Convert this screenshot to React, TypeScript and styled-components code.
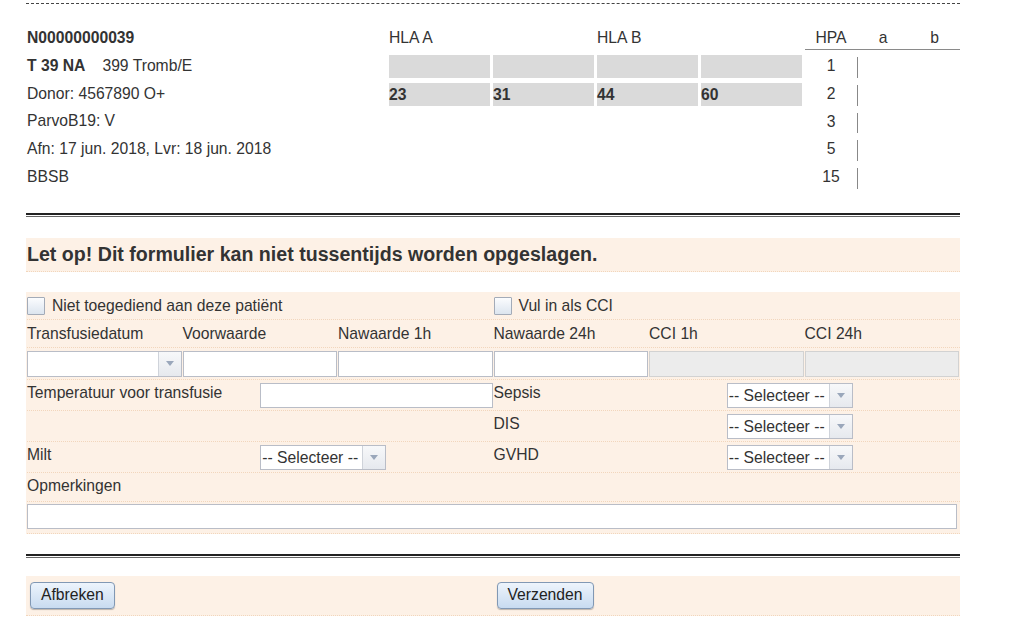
import React from 'react';
import styled, { createGlobalStyle } from 'styled-components';

const PEACH = '#fdf1e6';
const DOTS = '#f2d6bc';

const GlobalStyle = createGlobalStyle`
  html, body {
    margin: 0;
    background: #fff;
  }
  body {
    font-family: "Liberation Sans", Arial, sans-serif;
    font-size: 15.7px;
    color: #333;
  }
  * {
    box-sizing: border-box;
  }
`;

const Page = styled.div`
  width: 934px;
  margin-left: 26px;
  padding-top: 3px;
`;

const DashedRule = styled.div`
  border-top: 1px dashed #444;
`;

const DoubleRule = styled.div<{ $gap: number }>`
  margin-top: ${p => p.$gap}px;
  height: 4px;
  border-top: 2px solid #222;
  border-bottom: 1px solid #666;
`;

/* summary block */

const Summary = styled.div`
  display: flex;
  padding-top: 20px;
`;

const InfoColumn = styled.div`
  width: 363px;
  padding-left: 1px;
`;

const InfoLine = styled.div`
  line-height: 27.8px;
  white-space: nowrap;
`;

const Strong = styled.span<{ $gap?: number }>`
  font-weight: bold;
  margin-right: ${p => p.$gap ?? 0}px;
`;

const HlaGrid = styled.div`
  display: grid;
  grid-template-columns: repeat(4, 101px);
  grid-template-rows: 26px 23px 23px;
  column-gap: 3px;
  row-gap: 5px;
  align-self: flex-start;
`;

const HlaHeading = styled.div`
  grid-column: span 2;
  line-height: 28px;
`;

const HlaCell = styled.div`
  background: #dadada;
  font-weight: bold;
  line-height: 23px;
`;

const HpaGrid = styled.div`
  margin-left: auto;
  width: 155px;
  display: grid;
  grid-template-columns: 52px 52px 51px;
  grid-auto-rows: 27.8px;
  grid-template-rows: 28px;
  align-self: flex-start;
`;

const HpaHead = styled.div`
  height: 26px;
  line-height: 28px;
  text-align: center;
  border-bottom: 1px solid #8a8a8a;
`;

const HpaNum = styled.div`
  text-align: center;
  line-height: 27.8px;
`;

const HpaDivider = styled.div`
  margin: 5px 0 2px;
  border-left: 1px solid #888;
`;

/* notice */

const Notice = styled.div`
  margin-top: 21px;
  height: 34px;
  padding-left: 1px;
  line-height: 33px;
  background: ${PEACH};
  border-bottom: 1px dotted ${DOTS};
  font-size: 19.6px;
  font-weight: bold;
  color: #333;
`;

/* form */

const Form = styled.div`
  margin-top: 20px;
  background: ${PEACH};
  padding-left: 1px;
`;

const Row = styled.div<{ $cols: number; $pad: string; $center?: boolean }>`
  display: grid;
  grid-template-columns: repeat(${p => p.$cols}, 1fr);
  align-items: ${p => (p.$center ? 'center' : 'start')};
  padding: ${p => p.$pad};
  border-bottom: 1px dotted ${DOTS};
`;

const FieldLabel = styled.div`
  line-height: 20px;
  white-space: nowrap;
`;

const CheckLabel = styled.label`
  display: flex;
  align-items: center;
  gap: 7px;
  line-height: 18px;
`;

const CheckBox = styled.span`
  width: 18px;
  height: 18px;
  border: 1px solid #a3abb8;
  border-radius: 1px;
  background: linear-gradient(#fbfcfe, #dce5ef);
`;

const TextInput = styled.input<{ $h: number; $off?: boolean; $w?: string }>`
  display: block;
  width: ${p => p.$w ?? 'calc(100% - 1px)'};
  height: ${p => p.$h}px;
  margin: 0;
  padding: 0 2px;
  border: 1px solid ${p => (p.$off ? '#d2d2d2' : '#b9bdc7')};
  background: ${p => (p.$off ? '#ececec' : '#fff')};
  font: inherit;
  color: #333;
  outline: none;
`;

const ComboBox = styled.div<{ $w: string; $h: number }>`
  display: flex;
  width: ${p => p.$w};
  height: ${p => p.$h}px;
  border: 1px solid #b9bdc7;
  background: #fff;
`;

const ComboText = styled.div`
  flex: 1;
  padding-left: 1px;
  line-height: 23px;
  white-space: nowrap;
  overflow: hidden;
`;

const Trigger = styled.div`
  width: 23px;
  display: flex;
  align-items: center;
  justify-content: center;
  border-left: 1px solid #cfd3da;
  background: linear-gradient(#f7f8fa, #e6e9ee);
`;

const ButtonBar = styled.div`
  margin-top: 18px;
  display: grid;
  grid-template-columns: 1fr 1fr;
  padding: 6px 0 6px 1px;
  background: ${PEACH};
  border-bottom: 1px dotted ${DOTS};
`;

const Button = styled.button`
  justify-self: start;
  margin-left: 3px;
  height: 27px;
  padding: 0 10px;
  border: 1px solid #8198b4;
  border-radius: 4px;
  background: linear-gradient(#edf4fc, #c8dbf0);
  box-shadow: 0 1px 1px rgba(0, 0, 0, 0.25);
  font: inherit;
  color: #222;
`;

const Arrow = () => (
  <svg width="8" height="5" viewBox="0 0 8 5">
    <polygon points="0,0 8,0 4,5" fill="#9aa7bb" />
  </svg>
);

const Select = ({ text = '', w, h }: { text?: string; w: string; h: number }) => (
  <ComboBox $w={w} $h={h}>
    <ComboText>{text}</ComboText>
    <Trigger>
      <Arrow />
    </Trigger>
  </ComboBox>
);

const hpaValues = [1, 2, 3, 5, 15];
const hlaValues = ['23', '31', '44', '60'];

export default function App() {
  return (
    <>
      <GlobalStyle />
      <Page>
        <DashedRule />

        <Summary>
          <InfoColumn>
            <InfoLine>
              <Strong>N00000000039</Strong>
            </InfoLine>
            <InfoLine>
              <Strong $gap={17}>T 39 NA</Strong>399 Tromb/E
            </InfoLine>
            <InfoLine>Donor: 4567890 O+</InfoLine>
            <InfoLine>ParvoB19: V</InfoLine>
            <InfoLine>Afn: 17 jun. 2018, Lvr: 18 jun. 2018</InfoLine>
            <InfoLine>BBSB</InfoLine>
          </InfoColumn>

          <HlaGrid>
            <HlaHeading>HLA A</HlaHeading>
            <HlaHeading>HLA B</HlaHeading>
            {hlaValues.map((_, i) => (
              <HlaCell key={`e${i}`} />
            ))}
            {hlaValues.map(v => (
              <HlaCell key={v}>{v}</HlaCell>
            ))}
          </HlaGrid>

          <HpaGrid>
            <HpaHead>HPA</HpaHead>
            <HpaHead>a</HpaHead>
            <HpaHead>b</HpaHead>
            {hpaValues.map(n => (
              <React.Fragment key={n}>
                <HpaNum>{n}</HpaNum>
                <HpaDivider />
                <div />
              </React.Fragment>
            ))}
          </HpaGrid>
        </Summary>

        <DoubleRule $gap={22} />

        <Notice>Let op! Dit formulier kan niet tussentijds worden opgeslagen.</Notice>

        <Form>
          <Row $cols={2} $pad="5px 0 4px" $center>
            <CheckLabel>
              <CheckBox />
              Niet toegediend aan deze patiënt
            </CheckLabel>
            <CheckLabel>
              <CheckBox />
              Vul in als CCI
            </CheckLabel>
          </Row>

          <Row $cols={6} $pad="4px 0 3px">
            <FieldLabel>Transfusiedatum</FieldLabel>
            <FieldLabel>Voorwaarde</FieldLabel>
            <FieldLabel>Nawaarde 1h</FieldLabel>
            <FieldLabel>Nawaarde 24h</FieldLabel>
            <FieldLabel>CCI 1h</FieldLabel>
            <FieldLabel>CCI 24h</FieldLabel>
          </Row>

          <Row $cols={6} $pad="3px 0 2px">
            <Select w="calc(100% - 1px)" h={26} />
            <TextInput $h={26} />
            <TextInput $h={26} />
            <TextInput $h={26} />
            <TextInput $h={26} $off disabled />
            <TextInput $h={26} $off disabled />
          </Row>

          <Row $cols={4} $pad="3px 0 2px">
            <FieldLabel>Temperatuur voor transfusie</FieldLabel>
            <TextInput $h={25} />
            <FieldLabel>Sepsis</FieldLabel>
            <Select text="-- Selecteer --" w="126px" h={25} />
          </Row>

          <Row $cols={4} $pad="3px 0 2px">
            <div />
            <div />
            <FieldLabel>DIS</FieldLabel>
            <Select text="-- Selecteer --" w="126px" h={25} />
          </Row>

          <Row $cols={4} $pad="3px 0 2px">
            <FieldLabel>Milt</FieldLabel>
            <Select text="-- Selecteer --" w="126px" h={25} />
            <FieldLabel>GVHD</FieldLabel>
            <Select text="-- Selecteer --" w="126px" h={25} />
          </Row>

          <Row $cols={1} $pad="3px 0 5px">
            <FieldLabel>Opmerkingen</FieldLabel>
          </Row>

          <Row $cols={1} $pad="2px 0 4px">
            <TextInput $h={25} $w="930px" />
          </Row>
        </Form>

        <DoubleRule $gap={20} />

        <ButtonBar>
          <Button>Afbreken</Button>
          <Button>Verzenden</Button>
        </ButtonBar>
      </Page>
    </>
  );
}
